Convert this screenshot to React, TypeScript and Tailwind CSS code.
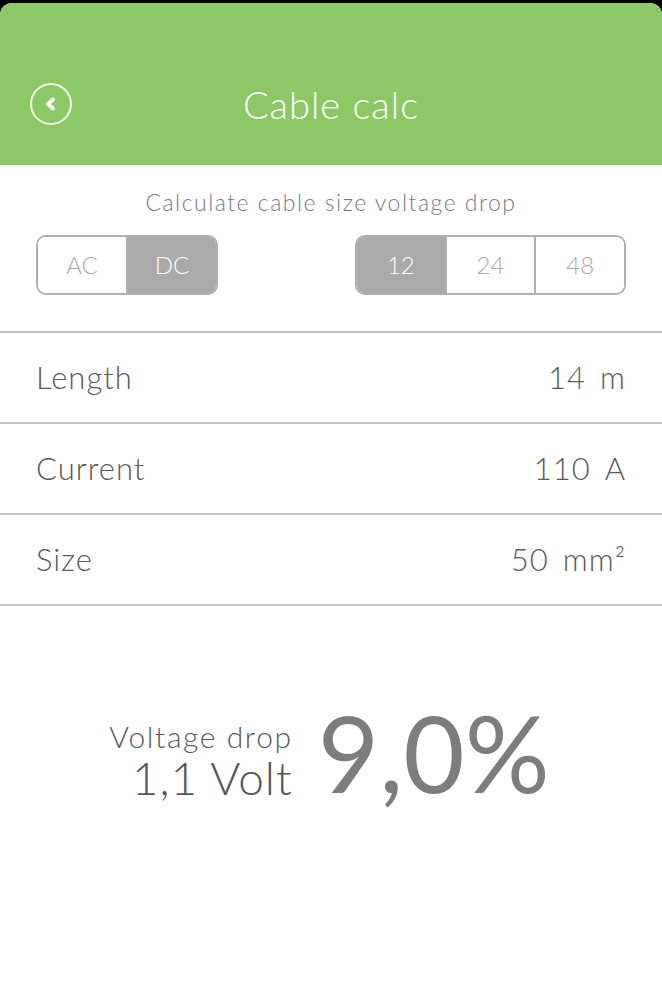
import { useState } from "react";

const rows = [
  { label: "Length", value: "14", unit: "m" },
  { label: "Current", value: "110", unit: "A" },
  { label: "Size", value: "50", unit: "mm²" },
];

export default function App() {
  const [mode, setMode] = useState<string>("DC");
  const [volt, setVolt] = useState<string>("12");

  return (
    <div className="min-h-[1000px] bg-black font-['Lato',sans-serif]">
      <div className="h-[3px]" />
      <div className="min-h-[997px] bg-white rounded-t-[12px] overflow-hidden">
        <header className="h-[162px] bg-[#8cc866] flex items-center pt-[40px] px-[30px] relative">
          <button className="w-[42px] h-[42px] rounded-full border-2 border-[#f4fbe9] flex items-center justify-center">
            <svg width="16" height="16" viewBox="0 0 16 16">
              <path
                d="M10 3.5 L5 8 L10 12.5"
                fill="none"
                stroke="white"
                strokeWidth="3.8"
                strokeLinecap="round"
                strokeLinejoin="round"
              />
            </svg>
          </button>
          <h1 className="absolute left-0 right-0 top-[40px] bottom-0 flex items-center justify-center text-white text-[38px] tracking-[1px] font-light pointer-events-none">
            Cable calc
          </h1>
        </header>

        <section className="border-b-2 border-[#c4c4c4]">
          <p className="text-center text-[#7a7a7a] text-[23px] tracking-[1.5px] font-light pt-[21px] leading-[32px]">
            Calculate cable size voltage drop
          </p>
          <div className="flex justify-between px-[36px] pt-[17px] pb-[36px]">
            <div className="flex h-[60px] w-[182px] rounded-[10px] border-2 border-[#b0b0b0] overflow-hidden">
              {["AC", "DC"].map((m, i) => (
                <button
                  key={m}
                  onClick={() => setMode(m)}
                  className={`flex-1 text-[24px] font-light ${
                    mode === m ? "bg-[#aaaaaa] text-white" : "bg-white text-[#aaaaaa]"
                  } ${i > 0 ? "border-l-2 border-[#b0b0b0]" : ""}`}
                >
                  {m}
                </button>
              ))}
            </div>
            <div className="flex h-[60px] w-[271px] rounded-[10px] border-2 border-[#b0b0b0] overflow-hidden">
              {["12", "24", "48"].map((v, i) => (
                <button
                  key={v}
                  onClick={() => setVolt(v)}
                  className={`flex-1 text-[24px] font-light ${
                    volt === v ? "bg-[#aaaaaa] text-white" : "bg-white text-[#aaaaaa]"
                  } ${i > 0 ? "border-l-2 border-[#b0b0b0]" : ""}`}
                >
                  {v}
                </button>
              ))}
            </div>
          </div>
        </section>

        {rows.map((r) => (
          <div
            key={r.label}
            className="h-[91px] flex items-center justify-between px-[36px] border-b-2 border-[#c4c4c4] text-[#5a5a5a] text-[31px] tracking-[1px] font-light"
          >
            <span>{r.label}</span>
            <span>
              {r.value}
              <span className="ml-[14px]">{r.unit}</span>
            </span>
          </div>
        ))}

        <div className="flex justify-center items-end gap-[25px] pt-[93px] pr-[3px]">
          <div className="text-right leading-none pb-[4px]">
            <div className="text-[30px] tracking-[1.6px] text-[#5a5a5a] font-light mb-[4px]">Voltage drop</div>
            <div className="text-[46px] tracking-[1px] text-[#555555] font-light">1,1 Volt</div>
          </div>
          <div className="text-[106px] text-[#7d7d7d] font-normal leading-none">9,0%</div>
        </div>
      </div>
    </div>
  );
}
